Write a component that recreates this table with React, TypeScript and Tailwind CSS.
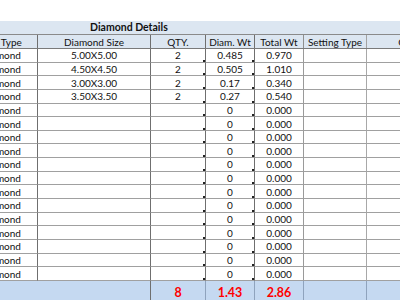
const grid = 'grid grid-cols-[80px_113px_55px_49px_49px_63px_110px]'

const rows: [string, string, string, string][] = [
  ['5.00X5.00', '2', '0.485', '0.970'],
  ['4.50X4.50', '2', '0.505', '1.010'],
  ['3.00X3.00', '2', '0.17', '0.340'],
  ['3.50X3.50', '2', '0.27', '0.540'],
]
while (rows.length < 17) rows.push(['', '', '0', '0.000'])

function Tick() {
  // small dark corner mark where the cell borders meet
  return <span className="absolute right-0 bottom-0 w-[2px] h-[2px] bg-[#222]" />
}

export default function App() {
  return (
    <div className="w-[400px] h-[300px] overflow-hidden bg-white text-[#111] font-['Lato',sans-serif] text-[10px]">
      <div className="-ml-[42px] w-[519px]">
        <div className="h-[21px]" />

        {/* title band */}
        <div className="h-[14px] bg-[#dce6f1] border-b border-[#8a8a8a] flex items-center pl-[132px]">
          <span className="font-bold text-[10.5px] leading-none">Diamond Details</span>
        </div>

        {/* column headers */}
        <div className={`${grid} h-[14px] bg-[#dce6f1] border-b border-[#7a7a7a] leading-none`}>
          <div className="border-r border-[#6f6f6f] flex items-center justify-center">Stone Type</div>
          <div className="border-r border-[#6f6f6f] flex items-center justify-center">Diamond Size</div>
          <div className="border-r border-[#6f6f6f] flex items-center justify-center">QTY.</div>
          <div className="border-r border-[#6f6f6f] flex items-center justify-center">Diam. Wt</div>
          <div className="border-r border-[#8f8f8f] flex items-center justify-center">Total Wt</div>
          <div className="border-r border-[#a3a3a3] flex items-center justify-center">Setting Type</div>
          <div className="flex items-center justify-center">Comments</div>
        </div>

        {/* data rows */}
        {rows.map((r, i) => (
          <div key={i} className={`${grid} h-[13.65px] leading-none`}>
            <div className="border-r border-b border-r-[#6f6f6f] border-b-[#a0a0a0] flex items-center pl-[23px]">Diamond</div>
            <div className="border-r border-b border-r-[#6f6f6f] border-b-[#a0a0a0] flex items-center justify-center">{r[0]}</div>
            <div className="relative border-r border-b border-r-[#6f6f6f] border-b-[#a0a0a0] flex items-center justify-center">
              {r[1]}
              <Tick />
            </div>
            <div className="relative border-r border-b border-r-[#6f6f6f] border-b-[#a0a0a0] flex items-center justify-center">
              {r[2]}
              <Tick />
            </div>
            <div className="border-r border-b border-r-[#9a9a9a] border-b-[#a0a0a0] flex items-center justify-center">{r[3]}</div>
            <div className="border-r border-b border-r-[#a8a8a8] border-b-[#a0a0a0]" />
            <div className="border-b border-b-[#a0a0a0]" />
          </div>
        ))}

        {/* totals */}
        <div className={`${grid} h-[24px] bg-[#c5d9f1] text-[#ff0000] font-bold text-[12.5px] leading-none`}>
          <div className="col-span-2 border-r border-[#6f6f6f]" />
          <div className="border-r border-[#8fa3bd] flex items-center justify-center">8</div>
          <div className="border-r border-[#8fa3bd] flex items-center justify-center">1.43</div>
          <div className="border-r border-[#8fa3bd] flex items-center justify-center">2.86</div>
          <div className="border-r border-[#8fa3bd]" />
          <div />
        </div>
      </div>
    </div>
  )
}
